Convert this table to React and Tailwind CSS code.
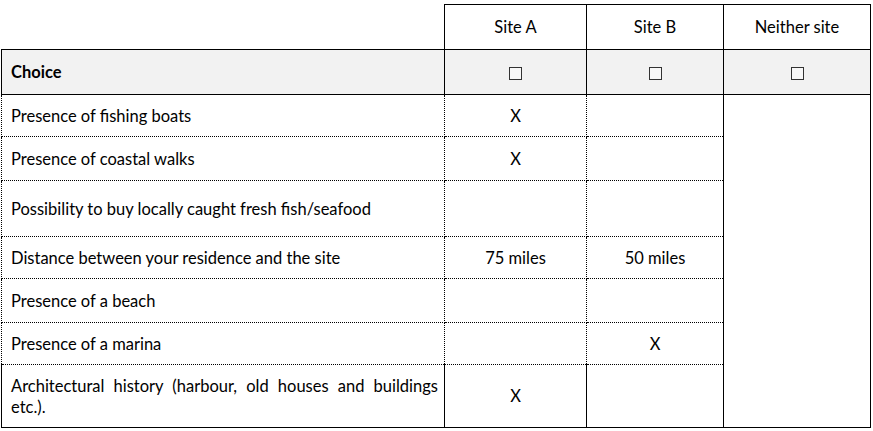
const rows = [
    { label: "Presence of fishing boats", a: "X", b: "", h: "h-[42px]" },
    { label: "Presence of coastal walks", a: "X", b: "", h: "h-[44px]" },
    { label: "Possibility to buy locally caught fresh fish/seafood", a: "", b: "", h: "h-[56px]" },
    { label: "Distance between your residence and the site", a: "75 miles", b: "50 miles", h: "h-[42px]" },
    { label: "Presence of a beach", a: "", b: "", h: "h-[44px]" },
    { label: "Presence of a marina", a: "", b: "X", h: "h-[42px]" },
    {
        label: "Architectural history (harbour, old houses and buildings etc.).",
        a: "X",
        b: "",
        h: "h-[63px]",
        justify: true,
    },
];

function Box() {
    return <span className="inline-block w-[13px] h-[13px] border border-[#333] bg-[#f8f8f8] align-middle" />;
}

export default function App() {
    return (
        <div className="bg-white w-[873px] h-[431px] pt-[4px] pl-[1px] text-black text-[16.5px] leading-[21px] font-['Lato',sans-serif]">
            <table className="border-collapse table-fixed w-[869px]">
                <colgroup>
                    <col className="w-[443px]" />
                    <col className="w-[142px]" />
                    <col className="w-[137px]" />
                    <col className="w-[147px]" />
                </colgroup>
                <tbody>
                    {/* Header */}
                    <tr className="h-[45px]">
                        <td className="p-0"></td>
                        <td className="border border-black text-center">Site A</td>
                        <td className="border border-black text-center">Site B</td>
                        <td className="border border-black text-center">Neither site</td>
                    </tr>

                    {/* Choice row */}
                    <tr className="h-[45px] bg-[#f2f2f2]">
                        <td className="border border-black pl-[9px] font-bold">Choice</td>
                        <td className="border border-black text-center"><Box /></td>
                        <td className="border border-black text-center"><Box /></td>
                        <td className="border border-black text-center"><Box /></td>
                    </tr>

                    {rows.map((r, i) => (
                        <tr key={i} className={r.h}>
                            <td
                                className={`border-x border-x-black border-b border-dotted border-b-black pl-[9px] pr-[6px] pt-[1px] ${
                                    i === rows.length - 1 ? "border-solid" : ""
                                } ${r.justify ? "text-justify" : ""}`}
                            >
                                {r.label}
                            </td>
                            <td
                                className={`border-x border-x-black border-b border-dotted border-b-black text-center pt-[1px] ${
                                    i === rows.length - 1 ? "border-solid" : ""
                                }`}
                            >
                                {r.a}
                            </td>
                            <td
                                className={`border-x border-x-black border-b border-dotted border-b-black text-center pt-[1px] ${
                                    i === rows.length - 1 ? "border-solid" : ""
                                }`}
                            >
                                {r.b}
                            </td>
                            {i === 0 && <td rowSpan={rows.length} className="border border-black"></td>}
                        </tr>
                    ))}
                </tbody>
            </table>
        </div>
    );
}
